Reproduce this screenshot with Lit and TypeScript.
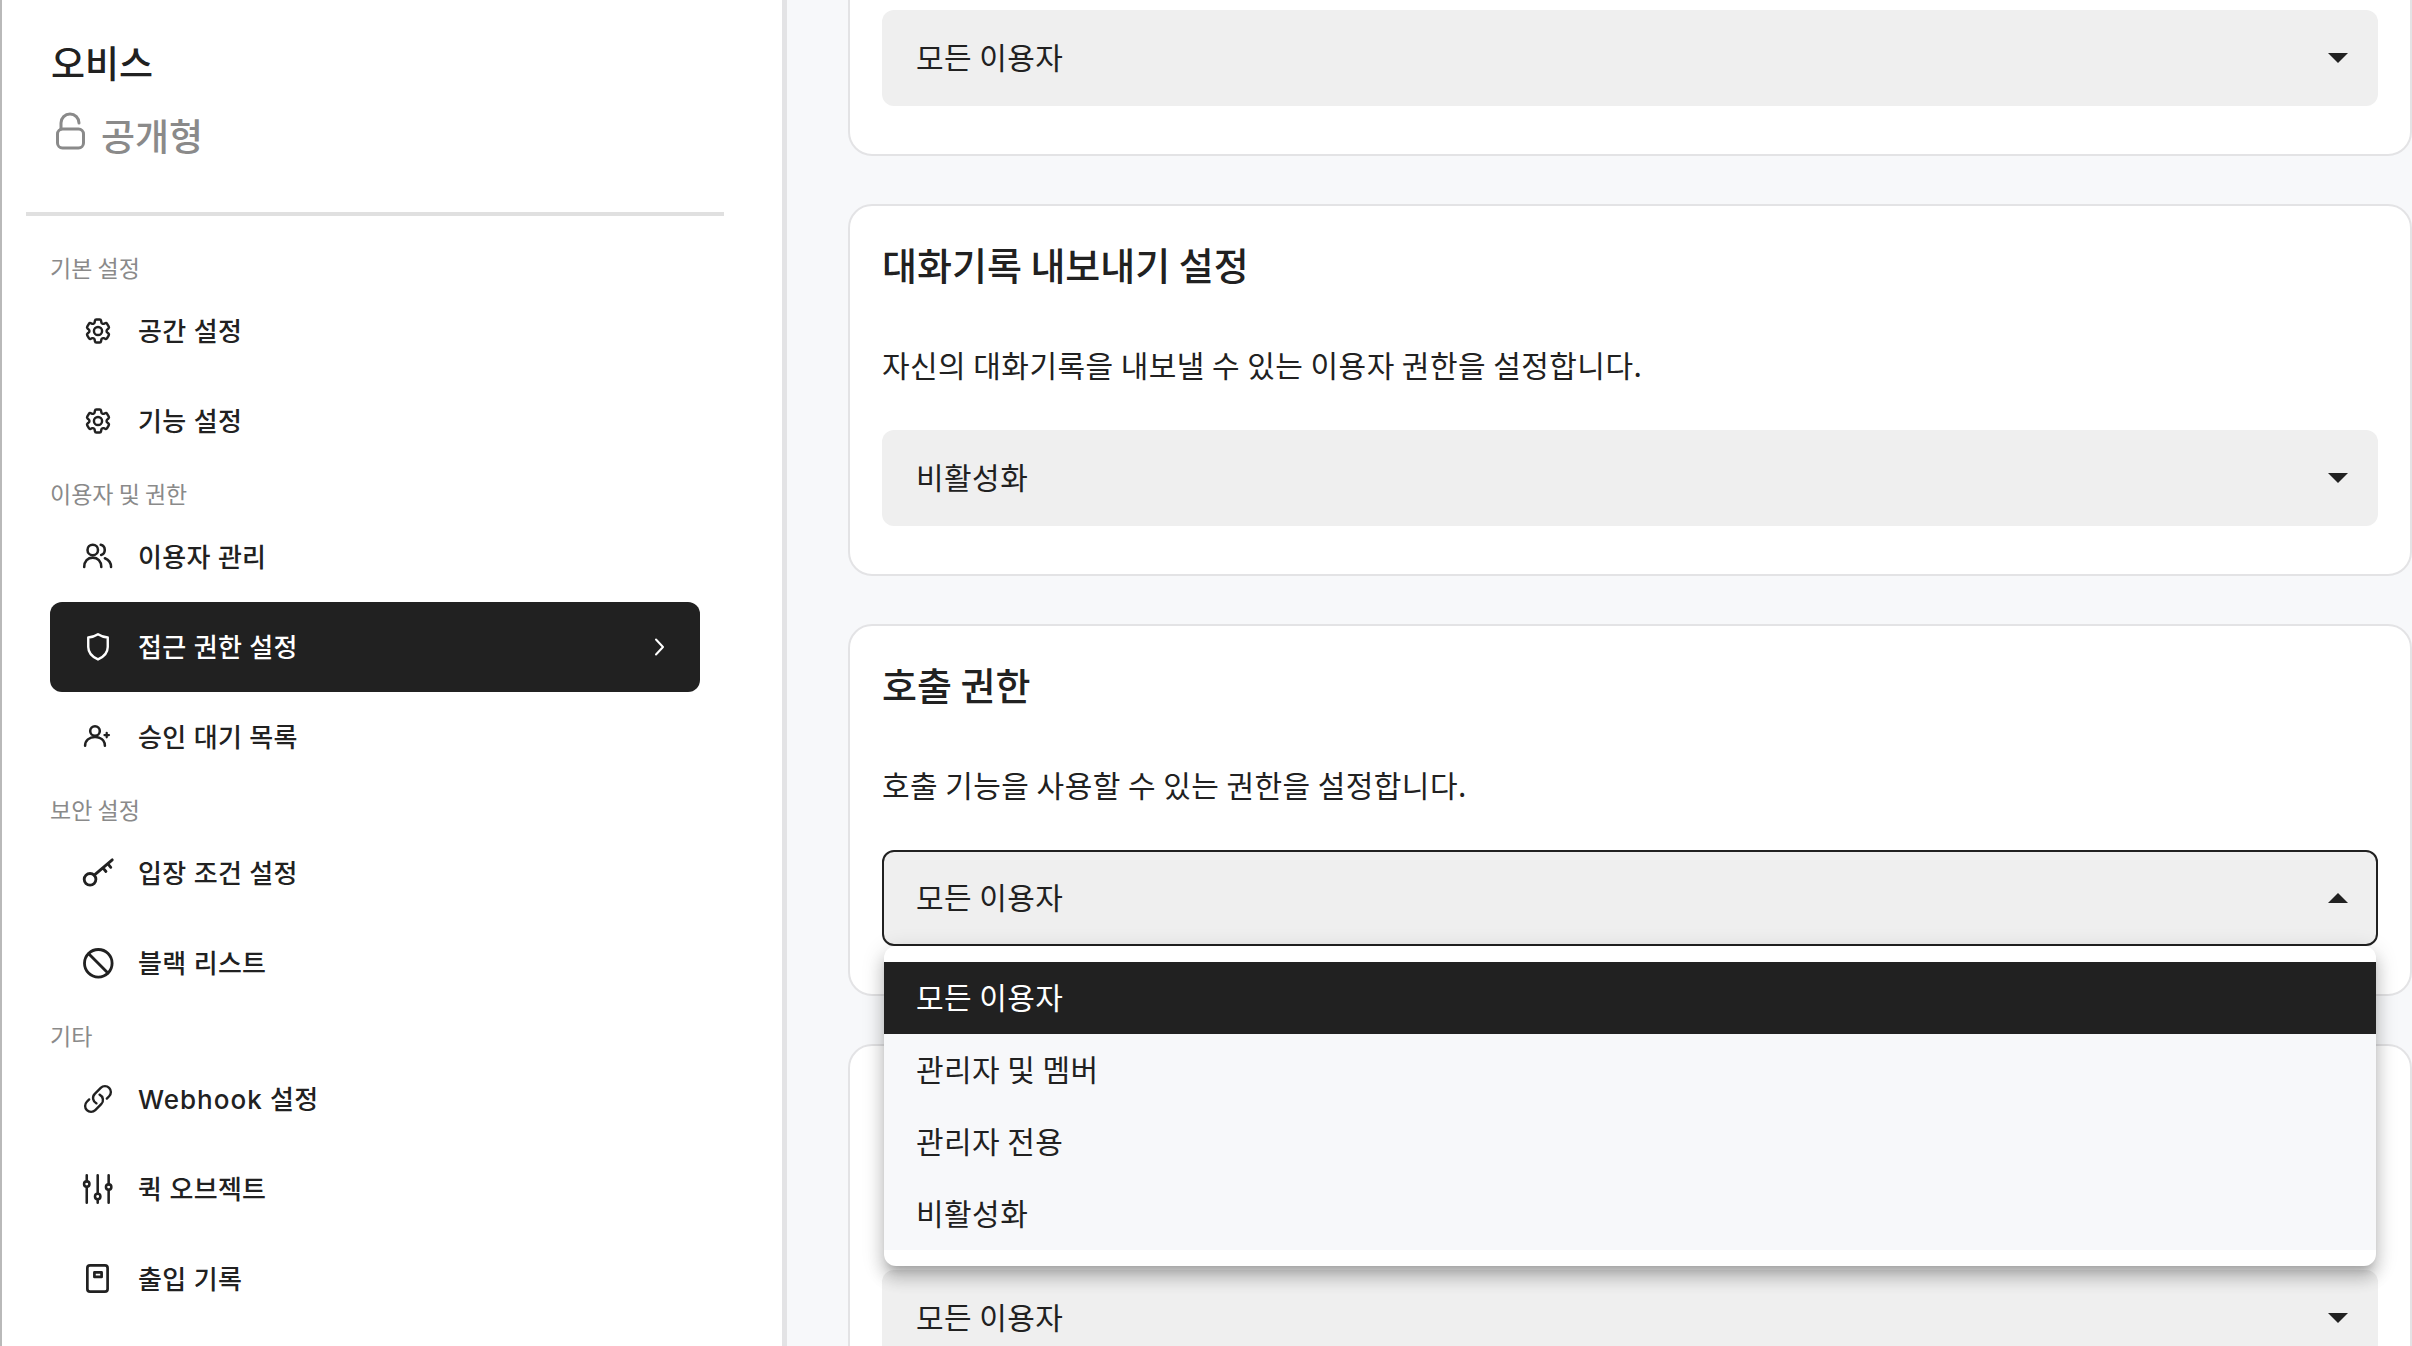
import { LitElement, html, css, svg } from "lit";
import { customElement } from "lit/decorators.js";

const ico = (body: unknown, extra = "") => html`<svg class="ico ${extra}" viewBox="0 0 24 24" fill="none" stroke="currentColor" stroke-width="1.6" stroke-linecap="round" stroke-linejoin="round">${body}</svg>`;

const gear = svg`<g transform="translate(12 12) scale(.85) translate(-12 -12)" stroke-width="1.900"><path d="M9.594 3.94c.09-.542.56-.94 1.11-.94h2.593c.55 0 1.02.398 1.11.94l.213 1.281c.063.374.313.686.645.87.074.04.147.083.22.127.325.196.72.257 1.075.124l1.217-.456a1.125 1.125 0 0 1 1.37.49l1.296 2.247a1.125 1.125 0 0 1-.26 1.431l-1.003.827c-.293.241-.438.613-.43.992a7.723 7.723 0 0 1 0 .255c-.008.378.137.75.43.991l1.004.827c.424.35.534.955.26 1.43l-1.298 2.247a1.125 1.125 0 0 1-1.369.491l-1.217-.456c-.355-.133-.75-.072-1.076.124a6.47 6.47 0 0 1-.22.128c-.331.183-.581.495-.644.869l-.213 1.281c-.09.543-.56.94-1.11.94h-2.594c-.55 0-1.019-.398-1.11-.94l-.213-1.281c-.062-.374-.312-.686-.644-.87a6.52 6.52 0 0 1-.22-.127c-.325-.196-.72-.257-1.076-.124l-1.217.456a1.125 1.125 0 0 1-1.369-.49l-1.297-2.247a1.125 1.125 0 0 1 .26-1.431l1.004-.827c.292-.24.437-.613.43-.991a6.932 6.932 0 0 1 0-.255c.007-.38-.138-.751-.43-.992l-1.004-.827a1.125 1.125 0 0 1-.26-1.43l1.297-2.247a1.125 1.125 0 0 1 1.37-.491l1.216.456c.356.133.751.072 1.076-.124.072-.044.146-.086.22-.128.332-.183.582-.495.644-.869l.214-1.28Z"/><circle cx="12" cy="12" r="3.200"/></g>`;
const users = svg`<g stroke-width="1.700"><circle cx="8.500" cy="7.300" r="3.500"/><path d="M2.800 18.700c0-3.900 2.400-6.300 5.700-6.300s5.700 2.400 5.700 6.300"/><path d="M13.800 3.900c1.600.4 2.700 1.800 2.700 3.400s-1 2.900-2.400 3.300M16.600 12.800c2.500 1 4.100 3 4.100 5.900"/></g>`;
const shield = svg`<path d="M12 3.500c2 1.300 4.200 2 6.500 2.200V12c0 3.800-2.500 6.500-6.500 8.300C8 18.500 5.500 15.800 5.500 12V5.700C7.800 5.500 10 4.800 12 3.500z"/>`;
const userPlus = svg`<g stroke-width="1.700"><circle cx="10" cy="8" r="3.200"/><path d="M3.400 17.800c0-3.500 2.800-5.800 6.600-5.800 1.100 0 2.100.2 3 .6 2.200.9 3.600 2.800 3.600 5.200"/><path d="M17.800 9.200v3M16.300 10.700h3" stroke-width="1.500"/></g>`;
const key = svg`<g stroke-width="1.900"><circle cx="6.700" cy="16.200" r="3.900"/><path d="M9.500 13.400L21.500 3.200M18.500 5.800l2 2.400M15.300 8.600l2 2.400"/></g>`;
const ban = svg`<g stroke-width="1.900"><circle cx="12.200" cy="12.200" r="9.200"/><path d="M5.800 5.800l12.800 12.800"/></g>`;
const link = svg`<g transform="translate(12 12) scale(.88) translate(-12 -12)" stroke-width="1.800"><path d="M13.190 8.688a4.500 4.500 0 0 1 1.242 7.244l-4.500 4.500a4.500 4.500 0 0 1-6.364-6.364l1.757-1.757m13.350-.622 1.757-1.757a4.500 4.500 0 0 0-6.364-6.364l-4.500 4.500a4.500 4.500 0 0 0 1.242 7.244"/></g>`;
const sliders = svg`<g stroke-width="1.700"><path d="M4.500 2.800v4M4.500 10.600v10.600M11.800 2.800v12.300M11.800 18.900v2.300M19.100 2.800v6M19.100 12.600v8.600"/><circle cx="4.500" cy="8.700" r="1.800"/><circle cx="11.800" cy="17" r="1.800"/><circle cx="19.100" cy="10.700" r="1.800"/></g>`;
const book = svg`<g stroke-width="1.800"><rect x="4.900" y="2.900" width="13.500" height="17.500" rx="1.800"/><rect x="9.600" y="7.600" width="4.800" height="3"/></g>`;

type Item = { label: unknown; icon: unknown; active?: boolean };
const NAV: { title: string; items: Item[] }[] = [
  { title: "기본 설정", items: [{ label: "공간 설정", icon: gear }, { label: "기능 설정", icon: gear }] },
  { title: "이용자 및 권한", items: [{ label: "이용자 관리", icon: users }, { label: "접근 권한 설정", icon: shield, active: true }, { label: "승인 대기 목록", icon: userPlus }] },
  { title: "보안 설정", items: [{ label: "입장 조건 설정", icon: key }, { label: "블랙 리스트", icon: ban }] },
  { title: "기타", items: [{ label: html`<em>Webhook</em> 설정`, icon: link }, { label: "퀵 오브젝트", icon: sliders }, { label: "출입 기록", icon: book }] },
];

const OPTIONS = ["모든 이용자", "관리자 및 멤버", "관리자 전용", "비활성화"];

@customElement("app-root")
export class AppRoot extends LitElement {
  static styles = css`
    :host { display: block; width: 2412px; height: 1346px; overflow: hidden; background: #f7f8fa; color: #212121;
      font-family: "Noto Sans CJK KR", "Noto Sans", sans-serif; }
    .page { display: flex; height: 100%; }
    .side { width: 787px; flex: none; box-sizing: border-box; background: #fff; border-left: 2px solid #b9b9b9;
      border-right: 5px solid #e3e3e5; display: flex; flex-direction: column; padding: 0 58px 0 24px; }
    .brand { padding: 39px 0 0 25px; height: 212px; box-sizing: border-box; }
    .name { font-size: 37px; line-height: 46px; font-weight: 500; }
    .vis { display: flex; align-items: center; gap: 13px; margin-top: 25px; color: #8a8a8a; font-size: 37px; line-height: 50px; font-weight: 500; }
    .vis svg { width: 36px; height: 42px; margin: 0 0 6px 1px; flex: none; }
    hr { border: 0; height: 4px; background: #e0e0e0; margin: 0 0 24px; }
    .sect { height: 46px; box-sizing: border-box; padding: 14px 0 0 24px; font-size: 23px; line-height: 26px; color: #8a8a8a; }
    .item { height: 90px; box-sizing: border-box; margin: 0 24px; padding: 0 28px 0 30px; display: flex; align-items: center; gap: 22px;
      font-family: Inter, "Noto Sans CJK KR", sans-serif; font-size: 26px; letter-spacing: .3px; font-weight: 500; color: #212121; border-radius: 12px; }
    .item span { line-height: 36px; margin-top: 2px; }
    .item em { font-style: normal; letter-spacing: 1px; }
    .item.on { background: #212121; color: #fff; }
    .ico { width: 36px; height: 36px; flex: none; }
    .ico.chev { margin-left: auto; width: 24px; height: 24px; stroke-width: 2; }
    .main { flex: 1; min-width: 0; overflow: hidden; padding-left: 61px; }
    .col { margin-top: -216px; display: flex; flex-direction: column; gap: 48px; }
    .card { height: 372px; box-sizing: border-box; background: #fff; border: 2px solid #e3e3e5; border-radius: 24px;
      padding: 0 32px 48px; display: flex; flex-direction: column; justify-content: flex-end; position: relative; width: 1564px; }
    h2 { margin: 0; font-size: 38px; line-height: 50px; font-weight: 500; }
    p { margin: 0; font-size: 30px; line-height: 44px; letter-spacing: .45px; }
    .head { display: flex; flex-direction: column; gap: 53px; margin-bottom: 44px; }
    .sel { height: 96px; box-sizing: border-box; border-radius: 12px; background: #efefef; display: flex; align-items: center;
      justify-content: space-between; padding: 0 30px 0 34px; font-size: 30px; letter-spacing: .45px; }
    .sel span { margin-bottom: 5px; }
    .sel.open { border: 2px solid #212121; padding: 0 28px 0 32px; }
    .arrow { width: 0; height: 0; border-left: 10px solid transparent; border-right: 10px solid transparent; border-top: 10px solid #212121; }
    .open .arrow { border-top: 0; border-bottom: 10px solid #212121; }
    .menu { position: absolute; left: 34px; right: 34px; top: 320px; z-index: 5; background: #fff; border-radius: 12px; padding: 16px 0;
      box-shadow: 0 8px 8px -5px rgba(0,0,0,.2), 0 12px 15px 2px rgba(0,0,0,.14), 0 5px 21px 3px rgba(0,0,0,.12); }
    .opt { height: 72px; box-sizing: border-box; padding: 0 0 5px 32px; display: flex; align-items: center; background: #f7f8fa; font-size: 30px; letter-spacing: .45px; }
    .opt.on { background: #212121; color: #fff; }
  `;

  private card(value: string, title = "", desc = "", open = false) {
    return html`<section class="card">
      ${title ? html`<div class="head"><h2>${title}</h2><p>${desc}</p></div>` : ""}
      <div class="sel ${open ? "open" : ""}"><span>${value}</span><i class="arrow"></i></div>
      ${open ? html`<div class="menu">${OPTIONS.map((o, i) => html`<div class="opt ${i === 0 ? "on" : ""}">${o}</div>`)}</div>` : ""}
    </section>`;
  }

  render() {
    return html`<div class="page">
      <aside class="side">
        <div class="brand">
          <div class="name">오비스</div>
          <div class="vis"><svg viewBox="0 0 36 42" fill="none" stroke="currentColor" stroke-width="3" stroke-linecap="round"><rect x="5.500" y="18" width="26" height="19" rx="5"/><path d="M9 18V12a9 9 0 0 1 18 0"/></svg><span>공개형</span></div>
        </div>
        <hr />
        ${NAV.map((s) => html`<div class="sect">${s.title}</div>${s.items.map((it) => html`<div class="item ${it.active ? "on" : ""}">${ico(it.icon)}<span>${it.label}</span>${it.active ? ico(svg`<path d="M8 4.500l7 7.500-7 7.500"/>`, "chev") : ""}</div>`)}`)}
      </aside>
      <main class="main"><div class="col">
        ${this.card("모든 이용자")}
        ${this.card("비활성화", "대화기록 내보내기 설정", "자신의 대화기록을 내보낼 수 있는 이용자 권한을 설정합니다.")}
        ${this.card("모든 이용자", "호출 권한", "호출 기능을 사용할 수 있는 권한을 설정합니다.", true)}
        ${this.card("모든 이용자")}
      </div></main>
    </div>`;
  }
}
